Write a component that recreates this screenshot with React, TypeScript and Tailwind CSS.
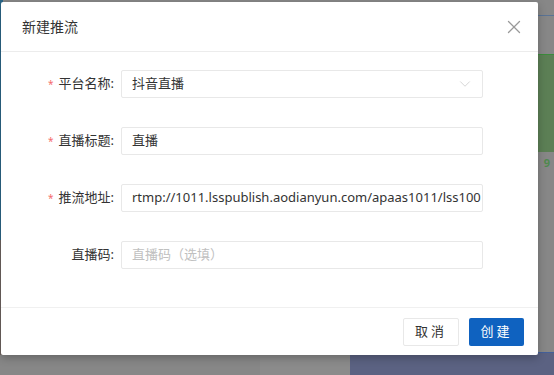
import { ChevronDown, X } from 'lucide-react';

const CJK = "font-['Noto_Sans','Noto_Sans_CJK_SC',sans-serif]";

const FIELDS = [
  { label: '平台名称', required: true, value: '抖音直播', select: true },
  { label: '直播标题', required: true, value: '直播' },
  { label: '推流地址', required: true, value: 'rtmp://1011.lsspublish.aodianyun.com/apaas1011/lss100' },
  { label: '直播码', required: false, placeholder: '直播码（选填）' },
];

function Field({ f }: { f: (typeof FIELDS)[number] }) {
  return (
    <div className="flex items-center h-[28px]">
      <div className="w-[120px] pr-[7px] flex justify-end items-center text-[13px] text-[#333]">
        {f.required && <span className="text-[#f56c6c] mr-[5px] text-[10px]">*</span>}
        <span>{f.label}:</span>
      </div>
      <div className="w-[362px] h-[28px] border border-[#e8e8e8] rounded-[2px] flex items-center pl-[10px] pr-[8px] overflow-hidden">
        {f.value ? (
          <span className="text-[13px] text-[#333] whitespace-nowrap">{f.value}</span>
        ) : (
          <span className="text-[13px] text-[#c0c0c0] whitespace-nowrap">{f.placeholder}</span>
        )}
        {f.select && <ChevronDown className="ml-auto text-[#c8c8c8]" size={18} strokeWidth={1} />}
      </div>
    </div>
  );
}

export default function App() {
  return (
    <div className={`relative w-[554px] h-[375px] overflow-hidden bg-[#878787] ${CJK}`}>
      {/* dimmed page behind */}
      <div className="absolute left-0 top-0 w-[3px] h-[240px] bg-[#2b6688]" />
      <div className="absolute left-0 top-[240px] w-[3px] h-[115px] bg-[#6e6460]" />
      <div className="absolute right-0 top-[15px] w-[16px] h-[1px] bg-[#5a7395]" />
      <div className="absolute right-0 top-[54px] w-[16px] h-[98px] bg-[#5c7f55] border-t border-[#3c8c3c]" />
      <div className="absolute right-[4px] top-[155px] text-[11px] font-bold text-[#4f8a4f]">9</div>
      <div className="absolute left-[350px] top-[352px] w-[204px] h-[23px] bg-[#5b6282] border-t border-[#44609a]" />
      <div className="absolute left-[260px] top-[355px] w-[90px] h-[20px] bg-[#8b8b8b]" />

      {/* modal */}
      <div className="absolute left-[1px] top-[2px] w-[537px] h-[353px] bg-white rounded-[2px] shadow-[0_3px_8px_rgba(0,0,0,0.25)] flex flex-col">
        <div className="h-[50px] flex items-center justify-between pl-[21px] pr-[13px] border-b border-[#ececec]">
          <span className="text-[14px] text-[#333]">新建推流</span>
          <X size={22} strokeWidth={1.4} className="text-[#999]" />
        </div>
        <div className="flex-1 flex flex-col gap-[29px] pt-[18px] border-b border-[#f0f0f0]">
          {FIELDS.map((f) => (
            <Field key={f.label} f={f} />
          ))}
        </div>
        <div className="h-[47px] flex items-center justify-end gap-[10px] pr-[14px]">
          <button className="w-[56px] h-[28px] border border-[#e8e8e8] rounded-[2px] text-[13px] text-[#333] tracking-[3px] bg-white">
            取消
          </button>
          <button className="w-[55px] h-[28px] rounded-[2px] text-[13px] text-white tracking-[3px] bg-[#0f62c0]">
            创建
          </button>
        </div>
      </div>
    </div>
  );
}
